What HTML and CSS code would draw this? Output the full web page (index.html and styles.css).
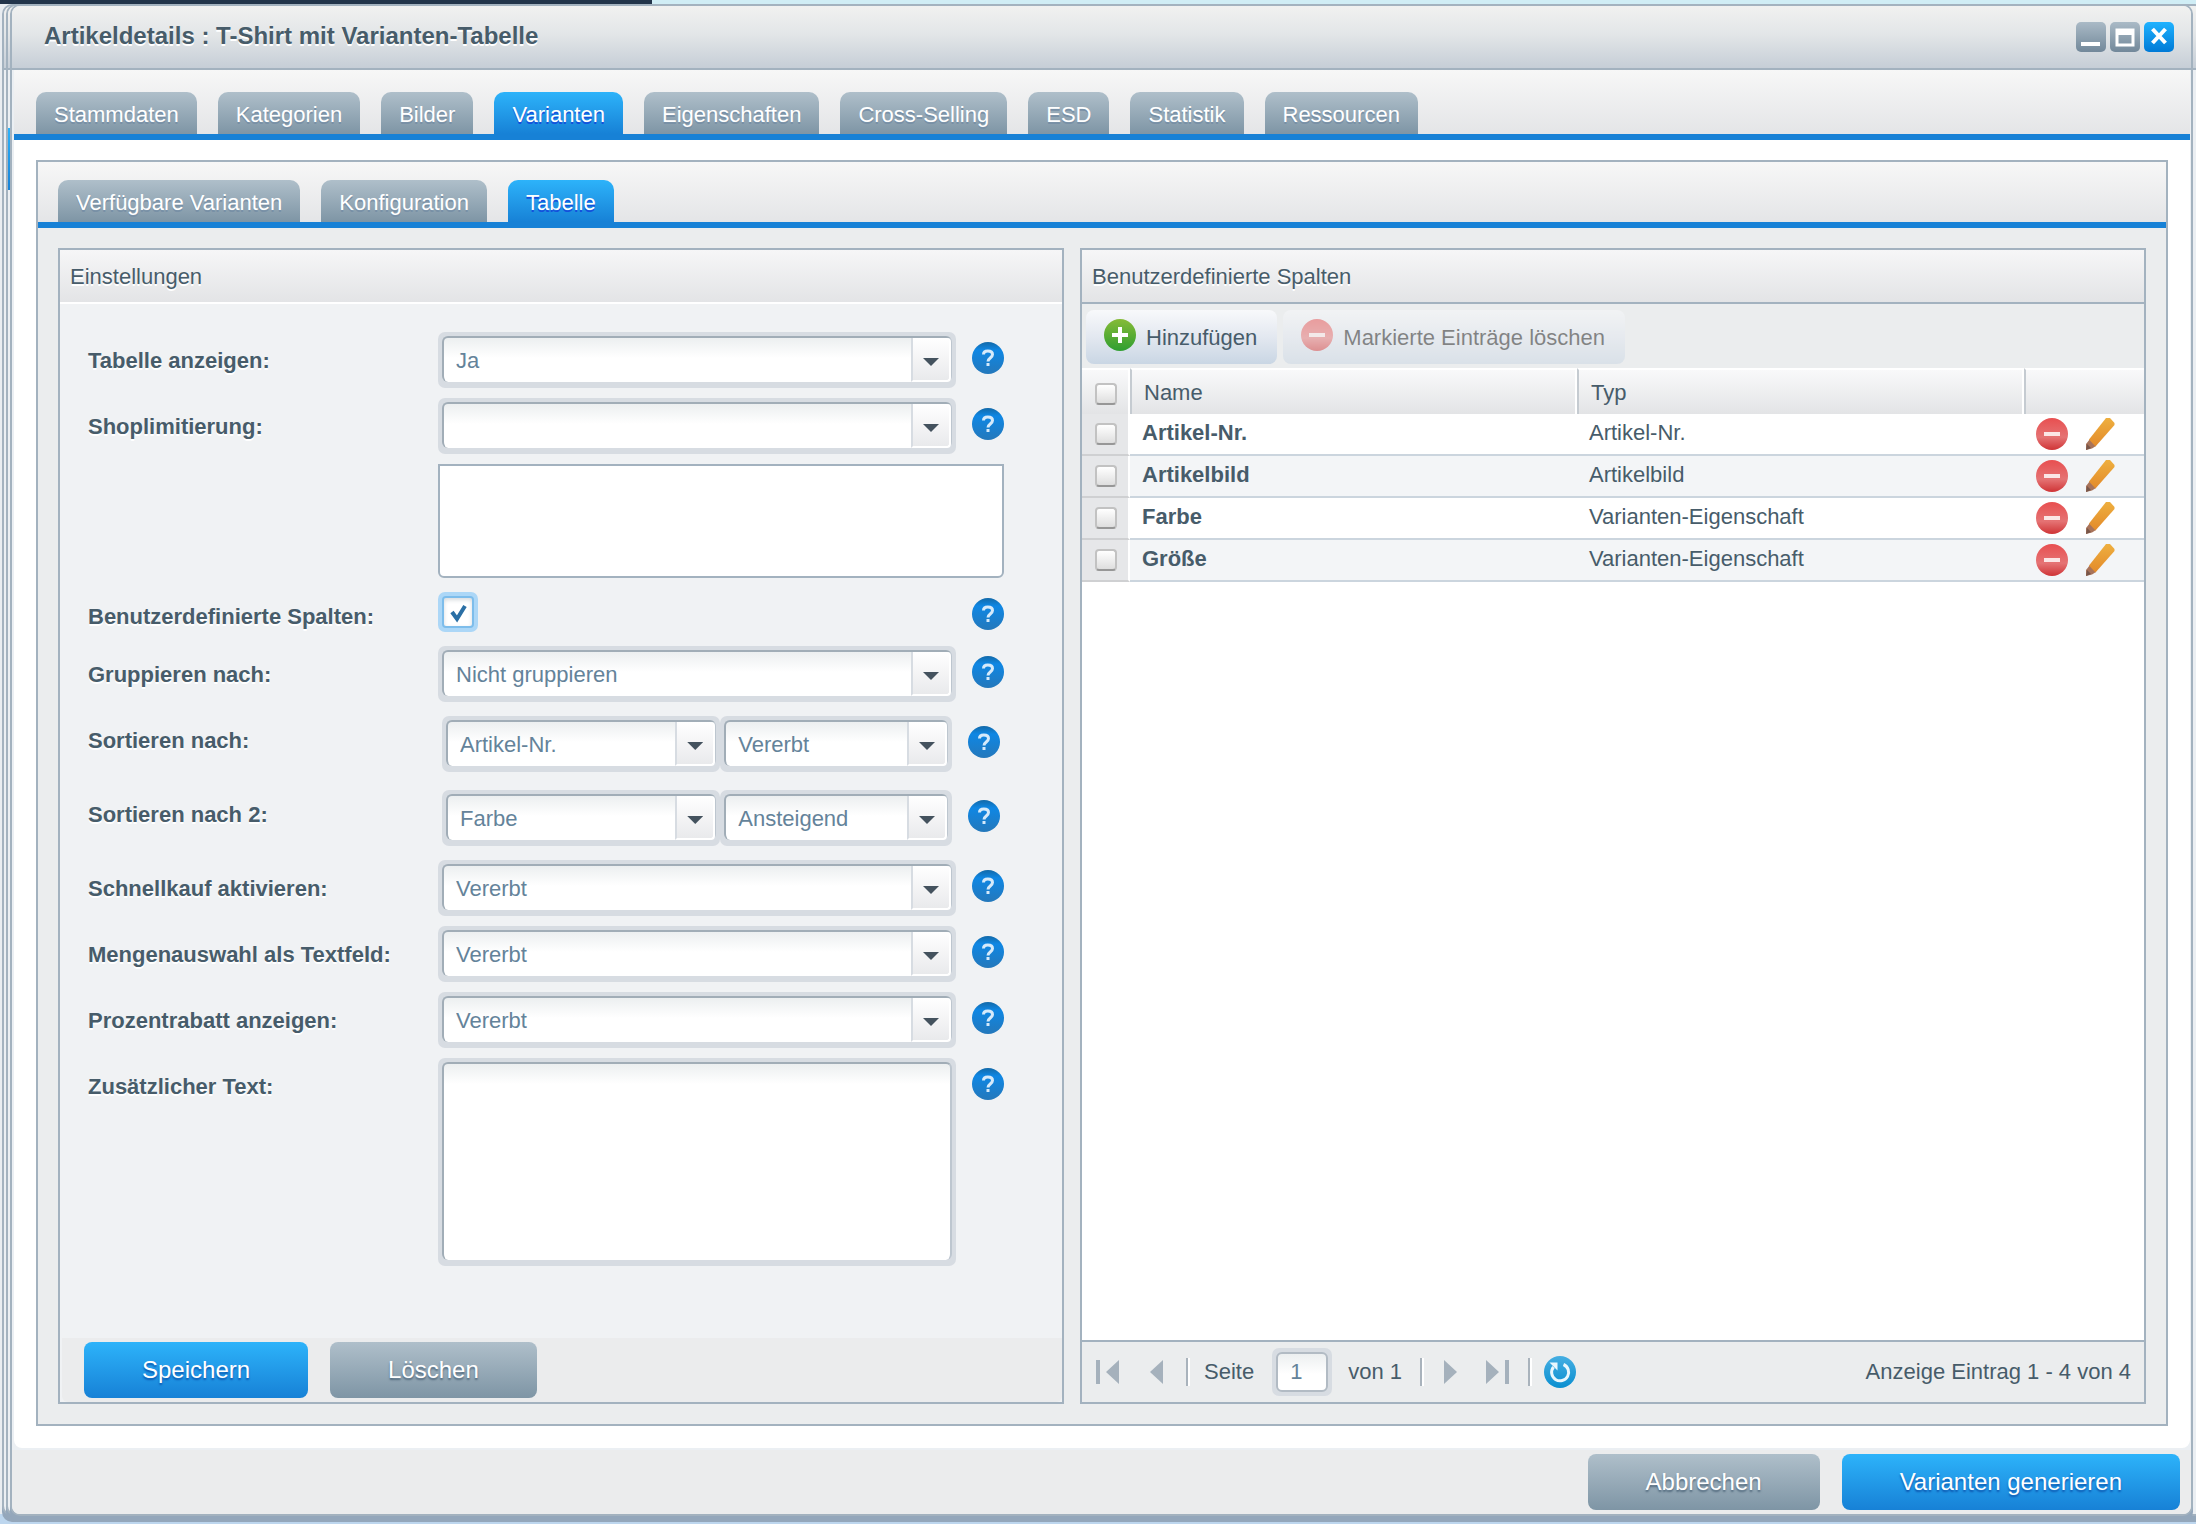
FILE: index.html
```html
<!DOCTYPE html>
<html lang="de">
<head>
<meta charset="utf-8">
<title>Artikeldetails : T-Shirt mit Varianten-Tabelle</title>
<link rel="stylesheet" href="styles.css">
</head>
<body>
<svg class="sprite" width="0" height="0" aria-hidden="true">
  <defs>
    <linearGradient id="g-help" x1="0" y1="0" x2="0" y2="1"><stop offset="0" stop-color="#1269a8"/><stop offset=".25" stop-color="#0f87e4"/><stop offset="1" stop-color="#2478bb"/></linearGradient>
    <linearGradient id="g-add" x1="0" y1="0" x2="0" y2="1"><stop offset="0" stop-color="#86bb37"/><stop offset="1" stop-color="#2f9e31"/></linearGradient>
    <linearGradient id="g-del" x1="0" y1="0" x2="0" y2="1"><stop offset="0" stop-color="#e84f50"/><stop offset=".6" stop-color="#e57374"/><stop offset="1" stop-color="#cf3436"/></linearGradient>
    <linearGradient id="g-pen" x1="0" y1="0" x2="0" y2="1"><stop offset="0" stop-color="#eeaf3f"/><stop offset="1" stop-color="#e38a2a"/></linearGradient>
    <linearGradient id="g-ref" x1="0" y1="0" x2="0" y2="1"><stop offset="0" stop-color="#45aee2"/><stop offset="1" stop-color="#0a8fd0"/></linearGradient>
    <symbol id="i-help" viewBox="0 0 32 32"><circle cx="16" cy="16" r="16" fill="url(#g-help)"/><path d="M11.500 12.500C11.500 10 13 9 15.800 9s4.700 1.300 4.700 3.500c0 3.500-4.500 3.500-4.500 7" fill="none" stroke="#d6eafa" stroke-width="3"/><path d="M14.500 21h3v3h-3z" fill="#d6eafa"/></symbol>
    <symbol id="i-add" viewBox="0 0 32 32"><circle cx="16" cy="16" r="16" fill="url(#g-add)"/><path d="M16 8v16M8 16h16" stroke="#fff" stroke-width="4"/></symbol>
    <symbol id="i-del" viewBox="0 0 32 32"><circle cx="16" cy="16" r="16" fill="url(#g-del)"/><path d="M8 16h16" stroke="#fbe6e6" stroke-width="4"/></symbol>
    <symbol id="i-pen" viewBox="0 0 32 32"><path d="M0 32V26L4 21L10 28L6 30.500z" fill="#a8735a"/><path d="M0 32l1-6 4 4z" fill="#77564a"/><path d="M3 21.500L20 0h4l4.500 5v2L9.500 28.500z" fill="url(#g-pen)"/></symbol>
    <symbol id="i-refresh" viewBox="0 0 32 32"><circle cx="16" cy="16" r="16" fill="url(#g-ref)"/><path d="M19.500 8.500A8.500 8.500 0 1 1 9.500 11" fill="none" stroke="#e9f7fd" stroke-width="3"/><path d="M5.500 6.500h8v8z" fill="#e9f7fd"/></symbol>
    <symbol id="i-prev" viewBox="0 0 14 24"><path d="M13 0v24L0 12z" fill="#a5b1bc"/></symbol>
    <symbol id="i-next" viewBox="0 0 14 24"><path d="M0 0v24L13 12z" fill="#a5b1bc"/></symbol>
    <symbol id="i-first" viewBox="0 0 24 24"><path d="M0 0h4v24H0zM23 0v24L10 12z" fill="#a5b1bc"/></symbol>
    <symbol id="i-last" viewBox="0 0 24 24"><path d="M19 0h4v24h-4zM0 0v24L13 12z" fill="#a5b1bc"/></symbol>
  </defs>
</svg>

<div class="menubar"><div class="menubar-dark"></div></div>
<div class="back-window back-a"><div class="titlebar"></div></div>
<div class="back-window back-b"><div class="titlebar"></div><div class="back-tab"></div></div>

<main class="window">
  <header class="titlebar">
    <h1>Artikeldetails : T-Shirt mit Varianten-Tabelle</h1>
    <div class="tools">
      <button type="button" class="tool" aria-label="Minimieren"><svg viewBox="0 0 30 30"><path d="M5 20h19v4H5z" fill="#fff"/></svg></button>
      <button type="button" class="tool" aria-label="Maximieren"><svg viewBox="0 0 30 30"><path d="M7 8h16v15H7z" fill="none" stroke="#fff" stroke-width="3"/><path d="M6 7h18v6H6z" fill="#fff"/></svg></button>
      <button type="button" class="tool tool-close" aria-label="Schließen"><svg viewBox="0 0 30 30"><path d="M8.500 7L21.500 21M21.500 7L8.500 21" stroke="#fff" stroke-width="4"/></svg></button>
    </div>
  </header>

  <nav class="tabs outer-tabs">
    <button type="button" class="tab">Stammdaten</button>
    <button type="button" class="tab">Kategorien</button>
    <button type="button" class="tab">Bilder</button>
    <button type="button" class="tab active">Varianten</button>
    <button type="button" class="tab">Eigenschaften</button>
    <button type="button" class="tab">Cross-Selling</button>
    <button type="button" class="tab">ESD</button>
    <button type="button" class="tab">Statistik</button>
    <button type="button" class="tab">Ressourcen</button>
  </nav>

  <div class="content">
    <div class="card">
      <nav class="tabs inner-tabs">
        <button type="button" class="tab">Verfügbare Varianten</button>
        <button type="button" class="tab">Konfiguration</button>
        <button type="button" class="tab active">Tabelle</button>
      </nav>

      <div class="panels">
        <section class="panel panel-form">
          <h2>Einstellungen</h2>
          <form class="settings" id="settings">
            <div class="row">
              <label for="show">Tabelle anzeigen:</label>
              <div class="field"><span class="combo"><select id="show"><option>Ja</option></select><i class="trigger"></i></span>
              <button type="button" class="help" aria-label="Hilfe"><svg><use href="#i-help"/></svg></button></div>
            </div>
            <div class="row">
              <label for="shop">Shoplimitierung:</label>
              <div class="field"><span class="combo"><select id="shop"><option></option></select><i class="trigger"></i></span>
              <button type="button" class="help" aria-label="Hilfe"><svg><use href="#i-help"/></svg></button>
              <textarea class="shop-list" aria-label="Ausgewählte Shops"></textarea></div>
            </div>
            <div class="row row-check">
              <label for="custom">Benutzerdefinierte Spalten:</label>
              <div class="field"><span class="check"><input type="checkbox" id="custom" checked><svg viewBox="0 0 40 40"><path d="M14 20l5 7 8-13" fill="none" stroke="#2a6fa5" stroke-width="4"/></svg></span>
              <button type="button" class="help" aria-label="Hilfe"><svg><use href="#i-help"/></svg></button></div>
            </div>
            <div class="row">
              <label for="group">Gruppieren nach:</label>
              <div class="field"><span class="combo"><select id="group"><option>Nicht gruppieren</option></select><i class="trigger"></i></span>
              <button type="button" class="help" aria-label="Hilfe"><svg><use href="#i-help"/></svg></button></div>
            </div>
            <div class="row row-sort">
              <label for="sort1">Sortieren nach:</label>
              <div class="field"><span class="pair"><span class="combo"><select id="sort1"><option>Artikel-Nr.</option></select><i class="trigger"></i></span><span class="combo"><select aria-label="Richtung"><option>Vererbt</option></select><i class="trigger"></i></span></span>
              <button type="button" class="help" aria-label="Hilfe"><svg><use href="#i-help"/></svg></button></div>
            </div>
            <div class="row row-sort">
              <label for="sort2">Sortieren nach 2:</label>
              <div class="field"><span class="pair"><span class="combo"><select id="sort2"><option>Farbe</option></select><i class="trigger"></i></span><span class="combo"><select aria-label="Richtung 2"><option>Ansteigend</option></select><i class="trigger"></i></span></span>
              <button type="button" class="help" aria-label="Hilfe"><svg><use href="#i-help"/></svg></button></div>
            </div>
            <div class="row">
              <label for="quick">Schnellkauf aktivieren:</label>
              <div class="field"><span class="combo"><select id="quick"><option>Vererbt</option></select><i class="trigger"></i></span>
              <button type="button" class="help" aria-label="Hilfe"><svg><use href="#i-help"/></svg></button></div>
            </div>
            <div class="row">
              <label for="qty">Mengenauswahl als Textfeld:</label>
              <div class="field"><span class="combo"><select id="qty"><option>Vererbt</option></select><i class="trigger"></i></span>
              <button type="button" class="help" aria-label="Hilfe"><svg><use href="#i-help"/></svg></button></div>
            </div>
            <div class="row">
              <label for="percent">Prozentrabatt anzeigen:</label>
              <div class="field"><span class="combo"><select id="percent"><option>Vererbt</option></select><i class="trigger"></i></span>
              <button type="button" class="help" aria-label="Hilfe"><svg><use href="#i-help"/></svg></button></div>
            </div>
            <div class="row">
              <label for="text">Zusätzlicher Text:</label>
              <div class="field"><span class="combo"><textarea id="text"></textarea></span>
              <button type="button" class="help" aria-label="Hilfe"><svg><use href="#i-help"/></svg></button></div>
            </div>
          </form>
          <div class="form-bar">
            <button type="submit" form="settings" class="btn primary">Speichern</button>
            <button type="button" class="btn">Löschen</button>
          </div>
        </section>

        <section class="panel panel-grid">
          <h2>Benutzerdefinierte Spalten</h2>
          <div class="toolbar">
            <button type="button" class="tbtn"><svg><use href="#i-add"/></svg>Hinzufügen</button>
            <button type="button" class="tbtn" disabled><svg><use href="#i-del"/></svg>Markierte Einträge löschen</button>
          </div>
          <div class="grid-body">
            <table>
              <colgroup><col class="c-check"><col><col><col class="c-actions"></colgroup>
              <thead>
                <tr><th class="sel"><input type="checkbox" aria-label="Alle auswählen"></th><th>Name</th><th>Typ</th><th></th></tr>
              </thead>
              <tbody>
                <tr><td class="sel"><input type="checkbox" aria-label="Artikel-Nr."></td><td class="name">Artikel-Nr.</td><td>Artikel-Nr.</td><td><div class="actions"><button type="button" aria-label="Löschen"><svg><use href="#i-del"/></svg></button><button type="button" aria-label="Bearbeiten"><svg><use href="#i-pen"/></svg></button></div></td></tr>
                <tr><td class="sel"><input type="checkbox" aria-label="Artikelbild"></td><td class="name">Artikelbild</td><td>Artikelbild</td><td><div class="actions"><button type="button" aria-label="Löschen"><svg><use href="#i-del"/></svg></button><button type="button" aria-label="Bearbeiten"><svg><use href="#i-pen"/></svg></button></div></td></tr>
                <tr><td class="sel"><input type="checkbox" aria-label="Farbe"></td><td class="name">Farbe</td><td>Varianten-Eigenschaft</td><td><div class="actions"><button type="button" aria-label="Löschen"><svg><use href="#i-del"/></svg></button><button type="button" aria-label="Bearbeiten"><svg><use href="#i-pen"/></svg></button></div></td></tr>
                <tr><td class="sel"><input type="checkbox" aria-label="Größe"></td><td class="name">Größe</td><td>Varianten-Eigenschaft</td><td><div class="actions"><button type="button" aria-label="Löschen"><svg><use href="#i-del"/></svg></button><button type="button" aria-label="Bearbeiten"><svg><use href="#i-pen"/></svg></button></div></td></tr>
              </tbody>
            </table>
          </div>
          <div class="paging">
            <button type="button" class="pg wide" aria-label="Erste Seite"><svg><use href="#i-first"/></svg></button>
            <button type="button" class="pg pg-prev" aria-label="Vorherige Seite"><svg><use href="#i-prev"/></svg></button>
            <i class="sep"></i>
            <label for="page">Seite</label>
            <span class="combo page-box"><input type="text" id="page" value="1"></span>
            <span>von 1</span>
            <i class="sep sep-next"></i>
            <button type="button" class="pg pg-next" aria-label="Nächste Seite"><svg><use href="#i-next"/></svg></button>
            <button type="button" class="pg wide pg-last" aria-label="Letzte Seite"><svg><use href="#i-last"/></svg></button>
            <i class="sep sep-refresh"></i>
            <button type="button" class="help" aria-label="Aktualisieren"><svg><use href="#i-refresh"/></svg></button>
            <span class="status">Anzeige Eintrag 1 - 4 von 4</span>
          </div>
        </section>
      </div>
    </div>
  </div>

  <footer class="footer">
    <button type="button" class="btn">Abbrechen</button>
    <button type="button" class="btn primary">Varianten generieren</button>
  </footer>
</main>
</body>
</html>
```
FILE: styles.css
```css
* { box-sizing: border-box; }

body {
  margin: 0;
  position: relative;
  min-height: 100vh;
  overflow-x: hidden;
  background: linear-gradient(#e9edf1, #e9edf1) 0 0 / 100% calc(100% - 10px) no-repeat, #bdd6ee;
  font: 22px/28px "Liberation Sans", Arial, sans-serif;
  color: #475c6a;
}

button, select, input, textarea { font: inherit; color: inherit; margin: 0; }
button { border: 0; padding: 0; background: none; }
button svg { display: block; }
.sprite { position: absolute; }

/* desktop behind the window */
.menubar { height: 4px; background: #d0edf5; }
.menubar-dark { width: 652px; height: 4px; background: #22344a; }

.back-window, .window {
  border: 2px solid #a3b2bf;
  border-radius: 10px;
  background: #ebeff3;
  box-shadow: 0 6px 0 #94a7bb;
}
.back-window { position: absolute; top: 4px; bottom: 8px; right: -8px; overflow: hidden; }
.back-a { left: 2px; }
.back-b { left: 6px; }
.back-tab { width: 20px; height: 62px; margin-top: 58px; background: linear-gradient(#2db3fa, #1781d6); }

.window {
  position: relative;
  margin: 0 3px 8px 10px;
  min-height: calc(100vh - 12px);
  display: flex;
  flex-direction: column;
}

.titlebar {
  height: 64px;
  flex: none;
  display: flex;
  align-items: center;
  justify-content: space-between;
  padding: 0 17px 0 32px;
  border-bottom: 2px solid #a3b2bf;
  border-radius: 8px 8px 0 0;
  background: linear-gradient(#f1f1f0, #e3e6e8 45%, #c6ced7);
}
h1 { margin: 0; padding-bottom: 2px; font-size: 24px; line-height: 28px; text-shadow: 0 2px 0 #fff; }
.tools { display: flex; gap: 4px; }
.tool { width: 30px; height: 30px; border-radius: 5px; background: linear-gradient(#aabac6, #72889a); }
.tool-close { background: linear-gradient(#1fb2ff, #007ad6); }

/* tabs */
.tabs { display: flex; gap: 21px; border-bottom: 6px solid #1781d6; background: linear-gradient(#f7f7f7, #e4e5e7); }
.outer-tabs { margin: 0 1px 0 2px; padding: 22px 22px 0; }
.inner-tabs { padding: 18px 20px 0; }
.tab {
  height: 42px;
  padding: 3px 18px 0;
  border-radius: 10px 10px 0 0;
  background: linear-gradient(#afbfca, #7e95a5);
  color: #fff;
  text-shadow: 0 2px 0 #7890a6;
  white-space: nowrap;
}
.tab.active { background: linear-gradient(#2db3fa, #1781d6); text-shadow: 0 2px 0 #1450dc; }

.content {
  flex: 1;
  display: flex;
  margin: 0 1px 2px 2px;
  padding: 20px 22px 22px;
  border-radius: 0 0 8px 8px;
  background: #fff;
}
.card { flex: 1; display: flex; flex-direction: column; border: 2px solid #a3b2bf; background: #ebedee; }
.panels { flex: 1; display: grid; grid-template-columns: 1006fr 1066fr; gap: 16px; padding: 20px; }
.panel { display: flex; flex-direction: column; min-width: 0; border: 2px solid #a3b2bf; }
.panel-form { background: #f0f2f4; }

h2 {
  margin: 0;
  padding: 13px 10px 11px;
  font-size: 22px;
  line-height: 28px;
  font-weight: normal;
  border-bottom: 2px solid #fff;
  background: linear-gradient(#f6f6f7, #e3e4e6);
  text-shadow: 0 2px 0 #fff;
}
.panel-grid h2 { border-color: #a3b2bf; }

/* settings form */
.settings { flex: 1; padding: 28px 58px 0 28px; }
.row { display: flex; min-height: 56px; margin-bottom: 10px; }
.row label { width: 350px; padding-top: 15px; font-weight: bold; text-shadow: 0 2px 0 #fff; }
.field { flex: 1; min-width: 0; display: flex; flex-wrap: wrap; align-items: flex-start; gap: 10px 16px; }
.row-check { min-height: 48px; }
.row-check .check { margin-top: 4px; }
.row-check .help { margin-left: auto; }
.row-sort { margin-bottom: 8px; min-height: 66px; }
.row-sort .field { padding: 4px 4px 0; }

.combo { flex: 1; min-width: 0; display: grid; padding: 4px 4px 6px; border-radius: 7px; background: #d7dce2; }
.combo select, .combo input, .combo textarea {
  grid-area: 1 / 1;
  width: 100%;
  height: 46px;
  padding: 1px 50px 0 12px;
  appearance: none;
  outline: 0;
  resize: none;
  border: 2px solid #a1adb7;
  border-right-color: #bdc6cf;
  border-bottom: 0;
  border-radius: 6px;
  background: linear-gradient(#eceff0, #fff 20px);
  color: #64839a;
}
.combo textarea { height: 198px; }
.trigger {
  grid-area: 1 / 1;
  justify-self: end;
  width: 40px;
  margin: 2px 1px 0 0;
  display: grid;
  place-items: center;
  border: solid;
  border-width: 0 2px 2px;
  border-color: #fff #fff #fff #d7dce2;
  border-radius: 0 4px 4px 0;
  background: linear-gradient(#fff, #e9eaec);
  pointer-events: none;
}
.trigger::after { content: ""; width: 16px; height: 8px; margin-top: 6px; background: #44525e; clip-path: polygon(0 0, 100% 0, 50% 100%); }
.pair { flex: 1; display: flex; }
.pair .combo { flex: 279 1 0; }
.pair .combo + .combo { flex-grow: 231; }

.shop-list { flex: 0 0 100%; height: 114px; resize: none; outline: 0; border: 2px solid #a3b2bf; border-radius: 0 0 6px 6px; background: #fff; }

.help { flex: none; width: 32px; height: 32px; margin-top: 10px; }
.help svg, .tbtn svg, .actions svg { width: 32px; height: 32px; }

.check { display: grid; width: 40px; height: 40px; border-radius: 7px; background: #acd7f7; }
.check input, .check svg { grid-area: 1 / 1; }
.check input {
  appearance: none;
  margin: 4px;
  border: 2px solid #7dbdeb;
  border-radius: 4px;
  background: #fff;
  box-shadow: inset 0 2px 4px #d5dade;
}
.check svg { pointer-events: none; }

.form-bar { display: flex; gap: 22px; margin-left: 2px; padding: 4px 22px; border-radius: 0 0 6px 6px; background: #ebeced; }
.btn {
  height: 56px;
  padding: 0 58px;
  border-radius: 8px;
  background: linear-gradient(#afbfca, #7e95a5);
  font-size: 24px;
  color: #fff;
  text-shadow: 0 2px 2px #50687c;
  white-space: nowrap;
}
.btn.primary { background: linear-gradient(#2db3fa, #1781d6); text-shadow: 0 2px 2px #0d55ae; }

/* column grid */
.toolbar { display: flex; gap: 6px; padding: 6px 4px 4px; }
.tbtn {
  display: flex;
  align-items: center;
  gap: 10px;
  height: 54px;
  padding: 2px 20px 0 18px;
  border-radius: 8px;
  background: linear-gradient(#f8f9fb, #e3e8f0 50%, #c9d6e4);
  white-space: nowrap;
}
.tbtn svg { margin-bottom: 6px; }
.tbtn:disabled { opacity: .5; color: #1a1a1a; }

.grid-body { flex: 1; background: #fff; }
table { width: 100%; table-layout: fixed; border-collapse: separate; border-spacing: 0; text-align: left; }
.c-check { width: 48px; }
.c-actions { width: 120px; }
th {
  height: 46px;
  padding: 2px 12px 0;
  font-weight: normal;
  border-top: 2px solid #fff;
  border-left: 2px solid #c5cbd1;
  background: linear-gradient(#f9f9fa, #e3e4e6);
  box-shadow: inset -2px 0 0 #fff;
}
th:last-child { box-shadow: none; }
th.sel { border-left: 0; padding: 4px 13px 0; }
td { height: 42px; padding: 0 12px; line-height: 38px; vertical-align: top; border-bottom: 2px solid #cbd5de; }
tr:nth-child(even) td { background: #f3f5f7; }
tbody td.sel, tbody tr:nth-child(even) td.sel { padding: 9px 11px 0 13px; line-height: 0; background: #e6e7e9; border-bottom-color: #cfd0d2; border-right: 2px solid #fff; }
.name { font-weight: bold; }
.sel input {
  display: block;
  appearance: none;
  width: 22px;
  height: 22px;
  border: 2px solid #c2c2c2;
  border-bottom-color: #979797;
  border-radius: 4px;
  background: linear-gradient(#fff, #dedede);
}
.actions { display: flex; gap: 18px; padding-top: 4px; }

.paging { display: flex; align-items: center; height: 62px; padding: 0 13px 0 14px; border-top: 2px solid #a3b2bf; }
.pg, .pg svg { width: 14px; height: 24px; }
.pg.wide, .pg.wide svg { width: 24px; }
.pg-prev { margin-left: 30px; }
.sep { width: 4px; height: 28px; margin: 0 14px 0 22px; background: linear-gradient(90deg, #a9b3bc 50%, #fff 50%); }
.page-box { flex: none; width: 60px; margin: 0 16px 0 18px; padding: 4px; }
.page-box input { height: 40px; padding: 0 12px; border: 2px solid #b2bbc4; }
.sep-next { margin: 0 20px 0 18px; }
.pg-last { margin-left: 28px; }
.sep-refresh { margin: 0 12px 0 18px; }
.paging .help { margin-top: 0; }
.status { margin-left: auto; }

.footer { display: flex; justify-content: flex-end; gap: 22px; padding: 4px 11px; background: #ebeced; border-radius: 0 0 8px 8px; }
```
